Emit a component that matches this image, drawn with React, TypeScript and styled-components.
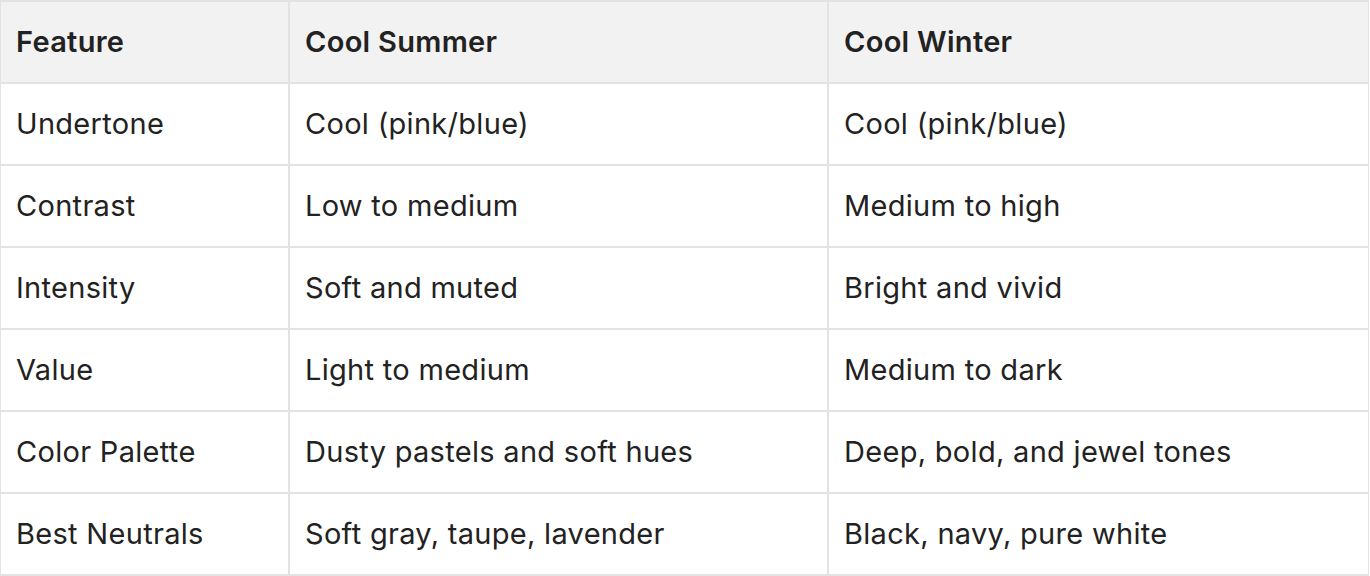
import styled, { createGlobalStyle } from "styled-components";

const rows: [string, string, string][] = [
    ["Undertone", "Cool (pink/blue)", "Cool (pink/blue)"],
    ["Contrast", "Low to medium", "Medium to high"],
    ["Intensity", "Soft and muted", "Bright and vivid"],
    ["Value", "Light to medium", "Medium to dark"],
    ["Color Palette", "Dusty pastels and soft hues", "Deep, bold, and jewel tones"],
    ["Best Neutrals", "Soft gray, taupe, lavender", "Black, navy, pure white"],
];

export default function App() {
    return (
        <>
            <GlobalStyle />
            <Wrap>
                <Table>
                    <colgroup>
                        <col style={{ width: 289 }} />
                        <col style={{ width: 539 }} />
                        <col />
                    </colgroup>
                    <thead>
                        <tr>
                            <Th>Feature</Th>
                            <Th>Cool Summer</Th>
                            <Th>Cool Winter</Th>
                        </tr>
                    </thead>
                    <tbody>
                        {rows.map((r) => (
                            <tr key={r[0]}>
                                {r.map((c, i) => (
                                    <Td key={i}>{c}</Td>
                                ))}
                            </tr>
                        ))}
                    </tbody>
                </Table>
            </Wrap>
        </>
    );
}

const GlobalStyle = createGlobalStyle`
    html, body {
        margin: 0;
        padding: 0;
        background: #ffffff;
    }
    body {
        font-family: Inter, "Noto Sans", sans-serif;
        color: #222222;
    }
`;

const Wrap = styled.div`
    width: 1370px;
    height: 576px;
    overflow: hidden;
    margin-left: -1px;
`;

const Table = styled.table`
    width: 1371px;
    border-collapse: collapse;
    table-layout: fixed;
`;

const cell = `
    height: 80px;
    padding: 0 15px;
    border: 2px solid #e3e3e3;
    font-size: 29px;
    line-height: 34px;
    text-align: left;
    vertical-align: middle;
    white-space: nowrap;
    letter-spacing: 0.3px;
`;

const Th = styled.th`
    ${cell}
    background: #f2f2f2;
    font-weight: 600;
`;

const Td = styled.td`
    ${cell}
    font-weight: 400;
`;
